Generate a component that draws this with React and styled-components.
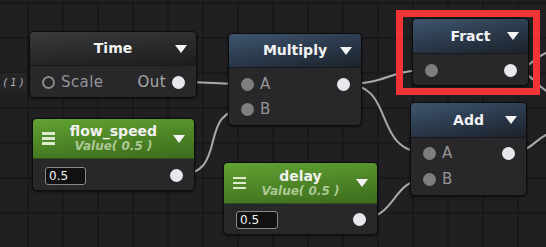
import styled, { createGlobalStyle } from 'styled-components';

const GlobalStyle = createGlobalStyle`
  html, body {
    margin: 0;
    padding: 0;
    background: #1f1f22;
  }
`;

const Canvas = styled.div`
  position: relative;
  width: 546px;
  height: 247px;
  overflow: hidden;
  background-color: #202023;
  background-image:
    linear-gradient(to right, #19191b 0, #19191b 2px, transparent 2px),
    linear-gradient(to bottom, #19191b 0, #19191b 2px, transparent 2px);
  background-size: 35px 35px;
  background-position: 27px 2px;
  font-family: "DejaVu Sans", Verdana, sans-serif;
`;

const Wires = styled.svg`
  position: absolute;
  left: 0;
  top: 0;
  width: 546px;
  height: 247px;
`;

const NodeBox = styled.div`
  position: absolute;
  left: ${p => p.$x}px;
  top: ${p => p.$y}px;
  width: ${p => p.$w}px;
  box-sizing: border-box;
  border: 1px solid #0c0c0d;
  border-radius: 5px;
  background: #28282b;
  box-shadow: 0 1px 3px rgba(0, 0, 0, 0.6);
  overflow: hidden;
`;

const headerBg = {
  dark: 'linear-gradient(175deg, #3b3b3d 0%, #2c2c2e 45%, #1d1d1f 100%)',
  blue: 'linear-gradient(170deg, #3f556e 0%, #2d3d50 45%, #1c222b 100%)',
  green: 'linear-gradient(175deg, #62a232 0%, #4e8627 50%, #3d6c1d 100%)',
};

const Header = styled.div`
  display: grid;
  grid-template-columns: 30px 1fr 30px;
  align-items: center;
  height: ${p => p.$h}px;
  background: ${p => headerBg[p.$variant]};
  border-bottom: 1px solid ${p => (p.$variant === 'green' ? '#2f4f1a' : '#18191c')};
`;

const Slot = styled.div`
  display: flex;
  align-items: center;
  justify-content: center;
`;

const Titles = styled.div`
  display: flex;
  flex-direction: column;
  align-items: center;
  gap: 1px;
  line-height: 1.05;
`;

const Title = styled.span`
  color: #f2f2f2;
  font-weight: bold;
  font-size: 14px;
  white-space: nowrap;
`;

const Sub = styled.span`
  color: #acc994;
  font-weight: bold;
  font-style: italic;
  font-size: 12px;
  white-space: nowrap;
`;

const Arrow = styled.div`
  width: 0;
  height: 0;
  border-left: 6.5px solid transparent;
  border-right: 6.5px solid transparent;
  border-top: 8px solid #f4f4f4;
`;

const Menu = styled.div`
  display: flex;
  flex-direction: column;
  gap: 2.5px;
  & > i {
    display: block;
    width: 13px;
    height: 2.5px;
    background: #dcebd0;
  }
`;

const Body = styled.div`
  padding: ${p => p.$pad};
`;

const Row = styled.div`
  display: flex;
  align-items: center;
  justify-content: space-between;
  height: ${p => p.$h || 25}px;
  padding: 0 11px 0 12px;
`;

const Side = styled.div`
  display: flex;
  align-items: center;
  gap: 6px;
`;

const Port = styled.div`
  width: 13px;
  height: 13px;
  border-radius: 50%;
  box-sizing: border-box;
  background: ${p => (p.$out ? '#e8e8ec' : '#7e7e80')};
`;

const Ring = styled.div`
  width: 13px;
  height: 13px;
  border-radius: 50%;
  box-sizing: border-box;
  border: 2.5px solid #8a8a8c;
`;

const Label = styled.span`
  color: ${p => (p.$out ? '#a8a8aa' : '#959597')};
  font-size: 15px;
  letter-spacing: 0.4px;
  line-height: 1;
`;

const ValueInput = styled.div`
  box-sizing: border-box;
  width: ${p => p.$w}px;
  height: 18px;
  border: 1px solid #8a8a8a;
  border-radius: 3px;
  background: #111112;
  color: #f0f0f0;
  font-size: 12px;
  line-height: 16px;
  padding-left: 3px;
`;

const Default = styled.div`
  position: absolute;
  left: 0;
  top: 73px;
  width: 27px;
  height: 19px;
  display: flex;
  align-items: center;
  justify-content: center;
  background: #252528;
  color: #b8b8ba;
  font-size: 10px;
  font-style: italic;
  white-space: pre;
`;

const Highlight = styled.div`
  position: absolute;
  left: 396px;
  top: 10px;
  width: 144px;
  height: 85px;
  box-sizing: border-box;
  border: 7px solid #ef3535;
`;

const Node = ({ x, y, w, variant, title, sub, menu, headerH, pad, children }) => (
  <NodeBox $x={x} $y={y} $w={w}>
    <Header $variant={variant} $h={headerH}>
      <Slot>{menu && <Menu><i /><i /><i /></Menu>}</Slot>
      <Titles>
        <Title>{title}</Title>
        {sub && <Sub>{sub}</Sub>}
      </Titles>
      <Slot><Arrow /></Slot>
    </Header>
    <Body $pad={pad}>{children}</Body>
  </NodeBox>
);

const wires = [
  'M179,82 C213,82 213,84 247,84',
  'M177,175 C232,175 194,109 247,109',
  'M344,84 C390,84 385,70 430,70',
  'M344,84 C398,84 370,153 428,153',
  'M359,219 C398,219 390,179 428,179',
  'M511,70 C530,70 532,58 548,52',
  'M511,70 C530,70 534,84 548,92',
  'M508,153 C530,153 534,140 548,134',
];

const App = () => (
  <>
    <GlobalStyle />
    <Canvas>
      <Wires viewBox="0 0 546 247">
        {wires.map(d => (
          <path key={d} d={d} fill="none" stroke="#a9a9ab" strokeWidth="2" />
        ))}
      </Wires>

      <Default>( 1 )</Default>

      <Node x={29} y={31} w={168} variant="dark" title="Time" headerH={33} pad="4px 0 2px">
        <Row>
          <Side><Ring /><Label>Scale</Label></Side>
          <Side><Label $out>Out</Label><Port $out /></Side>
        </Row>
      </Node>

      <Node x={228} y={33} w={134} variant="blue" title="Multiply" headerH={33} pad="4px 0 3px">
        <Row>
          <Side><Port /><Label>A</Label></Side>
          <Port $out />
        </Row>
        <Row>
          <Side><Port /><Label>B</Label></Side>
        </Row>
      </Node>

      <Node x={412} y={18} w={117} variant="blue" title="Fract" headerH={34} pad="4px 0 2px">
        <Row>
          <Port />
          <Port $out />
        </Row>
      </Node>

      <Node x={410} y={102} w={117} variant="blue" title="Add" headerH={34} pad="3px 0 3px">
        <Row>
          <Side><Port /><Label>A</Label></Side>
          <Port $out />
        </Row>
        <Row $h={26}>
          <Side><Port /><Label>B</Label></Side>
        </Row>
      </Node>

      <Node x={32} y={118} w={163} variant="green" title="flow_speed" sub="Value( 0.5 )" menu headerH={39} pad="4px 0 2px">
        <Row>
          <ValueInput $w={41}>0.5</ValueInput>
          <Port $out />
        </Row>
      </Node>

      <Node x={223} y={162} w={155} variant="green" title="delay" sub="Value( 0.5 )" menu headerH={40} pad="3px 0 2px">
        <Row>
          <ValueInput $w={42}>0.5</ValueInput>
          <Port $out />
        </Row>
      </Node>

      <Highlight />
    </Canvas>
  </>
);

export default App;
